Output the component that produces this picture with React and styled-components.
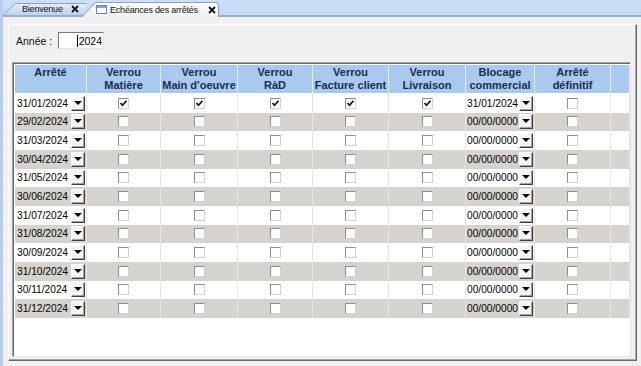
import React from "react";
import styled, { createGlobalStyle } from "styled-components";

const GlobalStyle = createGlobalStyle`
  html, body {
    margin: 0;
    padding: 0;
  }
  body {
    width: 641px;
    height: 366px;
    overflow: hidden;
    background: #f0f0f0;
    font-family: "Liberation Sans", Arial, sans-serif;
  }
`;

const COLUMNS = "72px 74px 77px 75px 76px 77px 69px 76px 19px";

const Window = styled.div`
  width: 641px;
  height: 366px;
  box-sizing: border-box;
  border-left: 3px solid #b9cdea;
  background: #f0f0f0;
  display: flex;
  flex-direction: column;
`;

const TabStrip = styled.div`
  height: 15px;
  flex: none;
  display: flex;
  align-items: flex-end;
  background: linear-gradient(#cfdff7, #c4d8f4);
  border-bottom: 2px solid #97aed0;
`;

const Tab = styled.div`
  position: relative;
  flex: none;
  box-sizing: border-box;
  display: flex;
  align-items: center;
  width: ${(p) => p.$width}px;
  height: ${(p) => (p.$active ? 15 : 12)}px;
  margin-left: ${(p) => p.$offset}px;
  margin-bottom: ${(p) => (p.$active ? -2 : 0)}px;
  padding-left: ${(p) => p.$pad}px;
  z-index: ${(p) => (p.$active ? 2 : 1)};
  font-size: 9px;
  letter-spacing: -0.2px;
  color: #111;
  white-space: nowrap;
`;

const TabShape = styled.svg`
  position: absolute;
  left: 0;
  top: 0;
  width: 100%;
  height: 100%;
  overflow: visible;
`;

const TabLabel = styled.span`
  position: relative;
  display: flex;
  align-items: center;
  gap: ${(p) => p.$gap}px;
`;

const Frame = styled.div`
  margin: 7px 0 0 5px;
  width: 629px;
  height: 337px;
  box-sizing: border-box;
  border-top: 1px solid #fbfbfb;
  border-left: 1px solid #fbfbfb;
  border-right: 1px solid #6a6a6a;
  border-bottom: 1px solid #6a6a6a;
  box-shadow: inset -1px -1px 0 #a4a4a4;
  padding: 7px 5px 3px 3px;
  display: flex;
  flex-direction: column;
`;

const YearRow = styled.div`
  height: 17px;
  display: flex;
  align-items: center;
  padding-left: 4px;
  font-size: 10.5px;
  color: #111;
`;

const YearLabel = styled.span`
  width: 42px;
`;

const YearInput = styled.div`
  width: 46px;
  height: 17px;
  box-sizing: border-box;
  background: #fff;
  border-top: 1px solid #7a7a7a;
  border-left: 1px solid #7a7a7a;
  border-right: 1px solid #e2e2e2;
  border-bottom: 1px solid #e2e2e2;
  display: flex;
  align-items: center;
  justify-content: flex-end;
  padding-right: 1px;
  font-size: 10.5px;
  color: #000;
`;

const Caret = styled.span`
  width: 1px;
  height: 12px;
  background: #000;
  margin-right: 1px;
`;

const GridBox = styled.div`
  margin-top: 13px;
  width: 619px;
  flex: 1;
  box-sizing: border-box;
  background: #fff;
  border-top: 1px solid #a0a0a0;
  border-left: 1px solid #a0a0a0;
  border-right: 1px solid #e4e4e4;
  border-bottom: 1px solid #e4e4e4;
  box-shadow: inset 1px 1px 0 #6b6b6b;
  padding: 2px 0 0 2px;
`;

const HeaderRow = styled.div`
  display: grid;
  grid-template-columns: ${COLUMNS};
  height: 28px;
  background: #a9c9ee;
  border-bottom: 1px solid #fff;
`;

const HeaderCell = styled.div`
  display: flex;
  flex-direction: column;
  align-items: center;
  padding-top: 1px;
  border-right: 1px solid #e4edf9;
  font-size: 11px;
  font-weight: 700;
  line-height: 13px;
  color: #1b2c50;
  white-space: nowrap;
`;

const Row = styled.div`
  display: grid;
  grid-template-columns: ${COLUMNS};
  height: 18.67px;
  background: ${(p) => (p.$odd ? "#d6d3ce" : "#fff")};
`;

const Cell = styled.div`
  display: flex;
  align-items: center;
  justify-content: ${(p) => (p.$date ? "space-between" : "center")};
  padding: ${(p) => (p.$date ? `0 1px 0 ${p.$pad}px` : "0")};
  border-right: 1px solid ${(p) => (p.$odd ? "#e6e4e1" : "#e6e6e6")};
  font-size: 10.2px;
  color: #000;
  white-space: nowrap;
`;

const DropButton = styled.span`
  width: 14px;
  height: 15px;
  flex: none;
  box-sizing: border-box;
  display: flex;
  align-items: center;
  justify-content: center;
  background: #f4f4f4;
  border-top: 1px solid #fff;
  border-left: 1px solid #fff;
  border-right: 1px solid #404040;
  border-bottom: 1px solid #404040;
  box-shadow: inset -1px -1px 0 #a0a0a0;

  &::after {
    content: "";
    border-left: 4px solid transparent;
    border-right: 4px solid transparent;
    border-top: 4px solid #000;
    margin: 0 1px 1px 0;
  }
`;

const Box = styled.span`
  width: 11px;
  height: 11px;
  box-sizing: border-box;
  display: flex;
  background: #fdfdfd;
  border-top: 1px solid #8e8e8e;
  border-left: 1px solid #8e8e8e;
  border-right: 1px solid #d2d2d2;
  border-bottom: 1px solid #d2d2d2;
`;

const CloseIcon = () => (
  <svg width="8" height="8" viewBox="0 0 8 8">
    <path d="M1 1 L7 7 M7 1 L1 7" stroke="#151515" strokeWidth="1.8" />
  </svg>
);

const WindowIcon = () => (
  <svg width="11" height="9" viewBox="0 0 11 9">
    <rect x="0.5" y="0.5" width="10" height="8" fill="#fff" stroke="#6c86b2" />
    <rect x="1" y="1" width="9" height="2" fill="#7fa2dc" />
  </svg>
);

const Checkbox = ({ checked }) => (
  <Box>
    {checked && (
      <svg width="9" height="9" viewBox="0 0 9 9">
        <polyline
          points="1.5,4 3.5,6.3 7.5,1.8"
          fill="none"
          stroke="#111"
          strokeWidth="1.7"
        />
      </svg>
    )}
  </Box>
);

const DateField = ({ value, pad, odd }) => (
  <Cell $date $pad={pad} $odd={odd}>
    <span>{value}</span>
    <DropButton />
  </Cell>
);

const headers = [
  ["Arrêté"],
  ["Verrou", "Matière"],
  ["Verrou", "Main d'oeuvre"],
  ["Verrou", "RàD"],
  ["Verrou", "Facture client"],
  ["Verrou", "Livraison"],
  ["Blocage", "commercial"],
  ["Arrêté", "définitif"],
  [],
];

const dates = [
  "31/01/2024",
  "29/02/2024",
  "31/03/2024",
  "30/04/2024",
  "31/05/2024",
  "30/06/2024",
  "31/07/2024",
  "31/08/2024",
  "30/09/2024",
  "31/10/2024",
  "30/11/2024",
  "31/12/2024",
];

const rows = dates.map((date, i) => ({
  date,
  locks: [i === 0, i === 0, i === 0, i === 0, i === 0],
  blocage: i === 0 ? "31/01/2024" : "00/00/0000",
  definitif: false,
}));

export default function App() {
  return (
    <>
      <GlobalStyle />
      <Window>
        <TabStrip>
          <Tab $width={83} $offset={0} $pad={19}>
            <TabShape viewBox="0 0 83 12" preserveAspectRatio="none">
              <defs>
                <linearGradient id="tabIdle" x1="0" y1="0" x2="0" y2="1">
                  <stop offset="0" stopColor="#e6effb" />
                  <stop offset="1" stopColor="#bcd1ef" />
                </linearGradient>
              </defs>
              <path
                d="M0 12 L12.5 0.5 H83 V12 Z"
                fill="url(#tabIdle)"
                stroke="none"
              />
              <path d="M0 12 L12.5 0.5 H83" fill="none" stroke="#8aa3c8" />
            </TabShape>
            <TabLabel $gap={8}>
              Bienvenue
              <CloseIcon />
            </TabLabel>
          </Tab>
          <Tab $width={137} $offset={-4} $pad={14} $active>
            <TabShape viewBox="0 0 137 15" preserveAspectRatio="none">
              <defs>
                <linearGradient id="tabActive" x1="0" y1="0" x2="0" y2="1">
                  <stop offset="0" stopColor="#ffffff" />
                  <stop offset="1" stopColor="#f0f0f0" />
                </linearGradient>
              </defs>
              <path
                d="M0 15 L13 0.5 H134 Q136.5 0.5 136.5 3 V15 Z"
                fill="url(#tabActive)"
              />
              <path
                d="M0 15 L13 0.5 H134 Q136.5 0.5 136.5 3 V15"
                fill="none"
                stroke="#8aa3c8"
              />
            </TabShape>
            <TabLabel $gap={3}>
              <WindowIcon />
              Echéances des arrêtés
              <span style={{ width: 4 }} />
              <CloseIcon />
            </TabLabel>
          </Tab>
        </TabStrip>

        <Frame>
          <YearRow>
            <YearLabel>Année :</YearLabel>
            <YearInput>
              <Caret />
              2024
            </YearInput>
          </YearRow>

          <GridBox>
            <HeaderRow>
              {headers.map((lines, i) => (
                <HeaderCell key={i}>
                  {lines.map((l) => (
                    <span key={l}>{l}</span>
                  ))}
                </HeaderCell>
              ))}
            </HeaderRow>
            {rows.map((r, i) => {
              const odd = i % 2 === 1;
              return (
                <Row key={r.date} $odd={odd}>
                  <DateField value={r.date} pad={2} odd={odd} />
                  {r.locks.map((c, j) => (
                    <Cell key={j} $odd={odd}>
                      <Checkbox checked={c} />
                    </Cell>
                  ))}
                  <DateField value={r.blocage} pad={1} odd={odd} />
                  <Cell $odd={odd}>
                    <Checkbox checked={r.definitif} />
                  </Cell>
                  <Cell $odd={odd} />
                </Row>
              );
            })}
          </GridBox>
        </Frame>
      </Window>
    </>
  );
}
